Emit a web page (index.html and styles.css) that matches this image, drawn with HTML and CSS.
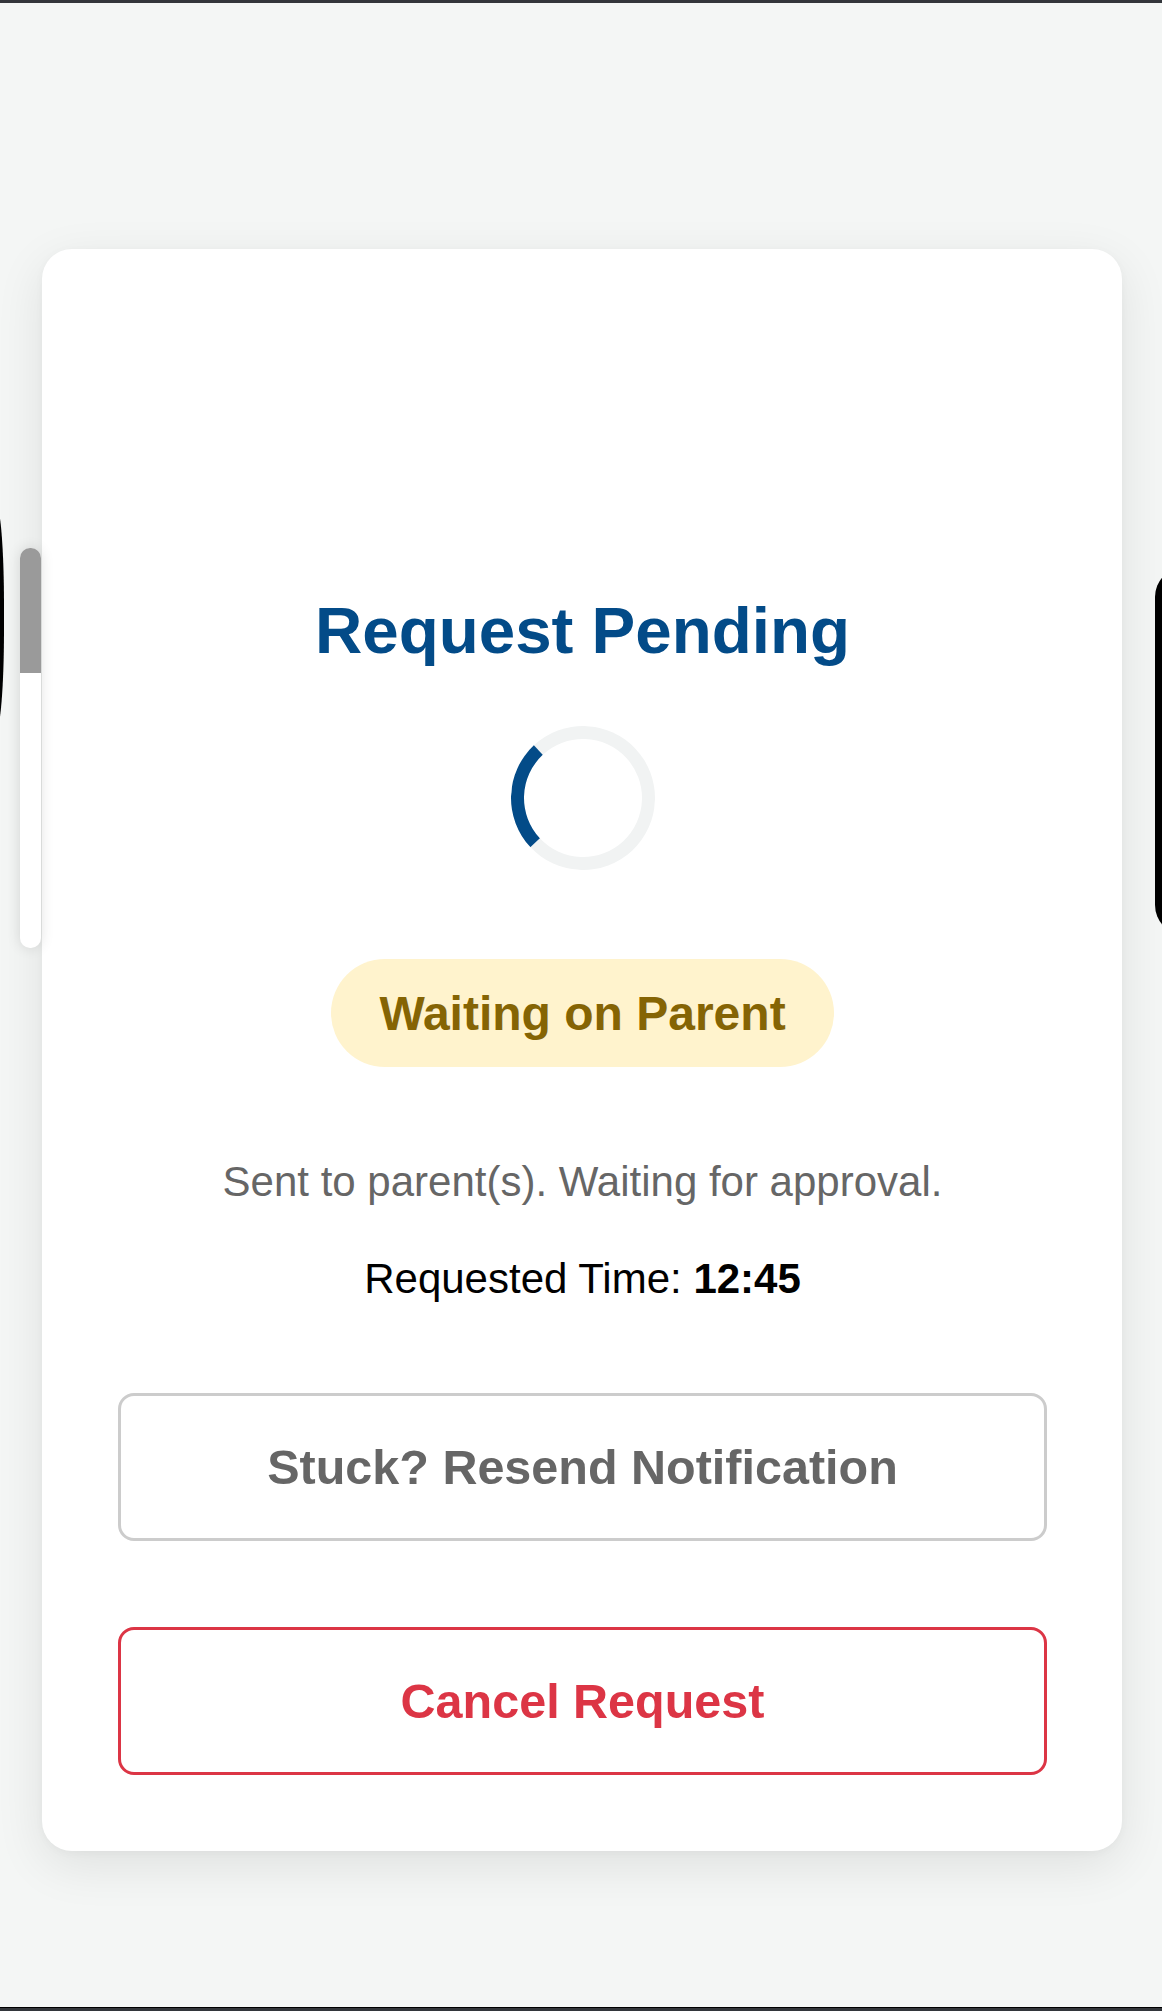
FILE: index.html
```html
<!DOCTYPE html>
<html lang="en">
<head>
<meta charset="utf-8">
<title>Request Pending</title>
<link rel="stylesheet" href="styles.css">
</head>
<body>
<div class="topbar"></div>
<main class="stage">
  <section class="card">
    <h1 class="title">Request Pending</h1>
    <div class="spinner" aria-label="Loading"></div>
    <div class="badge">Waiting on Parent</div>
    <p class="note">Sent to parent(s). Waiting for approval.</p>
    <p class="time">Requested Time: <strong>12:45</strong></p>
    <button class="btn btn-resend" type="button">Stuck? Resend Notification</button>
    <button class="btn btn-cancel" type="button">Cancel Request</button>
  </section>
</main>
<div class="bottombar"></div>

<div class="bezel bezel-left"></div>
<div class="bezel bezel-right"></div>
<div class="scrollbar"><div class="scrollbar-thumb"></div></div>
</body>
</html>
```
FILE: styles.css
```css
html, body {
  height: 100%;
  margin: 0;
  overflow: hidden;
}

body {
  position: relative;
  display: flex;
  flex-direction: column;
  background: #f4f6f5;
  font-family: "Liberation Sans", Arial, Helvetica, sans-serif;
}

.topbar {
  height: 3px;
  background: #33363b;
  flex: 0 0 auto;
}

.bottombar {
  height: 3px;
  border-top: 1px solid #000;
  background: #33363b;
  flex: 0 0 auto;
}

.stage {
  flex: 1 1 auto;
  padding: 246px 40px 0 42px;
}

.card {
  box-sizing: border-box;
  width: 1080px;
  height: 1602px;
  background: #fff;
  border-radius: 30px;
  box-shadow: 0 14px 50px rgba(0, 0, 0, 0.09), 0 2px 10px rgba(0, 0, 0, 0.03);
  padding: 345px 75px 0 76px;
  display: flex;
  flex-direction: column;
  align-items: center;
}

.title {
  margin: 0;
  font-size: 65.5px;
  line-height: 74px;
  font-weight: 700;
  color: #034b88;
}

.spinner {
  box-sizing: border-box;
  width: 144px;
  height: 144px;
  margin-top: 58px;
  border-radius: 50%;
  border: 13px solid #f1f3f3;
  border-left-color: #034b88;
  transform: rotate(2deg);
}

.badge {
  margin-top: 89px;
  padding: 28px 48px 26px;
  border-radius: 60px;
  background: #fff3cd;
  color: #856404;
  font-size: 48px;
  line-height: 54px;
  font-weight: 700;
}

.note {
  margin: 91px 0 0;
  font-size: 42px;
  line-height: 48px;
  color: #666;
}

.time {
  margin: 49px 0 0;
  font-size: 42px;
  line-height: 48px;
  color: #000;
}

.time strong {
  font-weight: 700;
}

.btn {
  box-sizing: border-box;
  width: 100%;
  height: 148px;
  background: #fff;
  border-radius: 16px;
  font-family: inherit;
  font-size: 48.5px;
  font-weight: 700;
  padding: 0;
  cursor: pointer;
}

.btn-resend {
  margin-top: 90px;
  border: 3px solid #cccccc;
  color: #666;
}

.btn-cancel {
  margin-top: 86px;
  border: 3px solid #dc3545;
  color: #dc3545;
}

/* decorative pieces peeking over the page edges */
.bezel {
  position: absolute;
  background: #000;
}

.bezel-left {
  left: -56px;
  top: 505px;
  width: 60px;
  height: 225px;
  border-radius: 0 8px 8px 0 / 0 100px 100px 0;
}

.bezel-right {
  left: 1155px;
  top: 567px;
  width: 60px;
  height: 368px;
  border-radius: 40px;
}

.scrollbar {
  position: absolute;
  left: 20px;
  top: 548px;
  width: 21px;
  height: 400px;
  border-radius: 10px;
  background: #fff;
  overflow: hidden;
  box-shadow: 0 0 14px rgba(0, 0, 0, 0.12);
}

.scrollbar-thumb {
  height: 125px;
  background: #9a9a9a;
}
```
